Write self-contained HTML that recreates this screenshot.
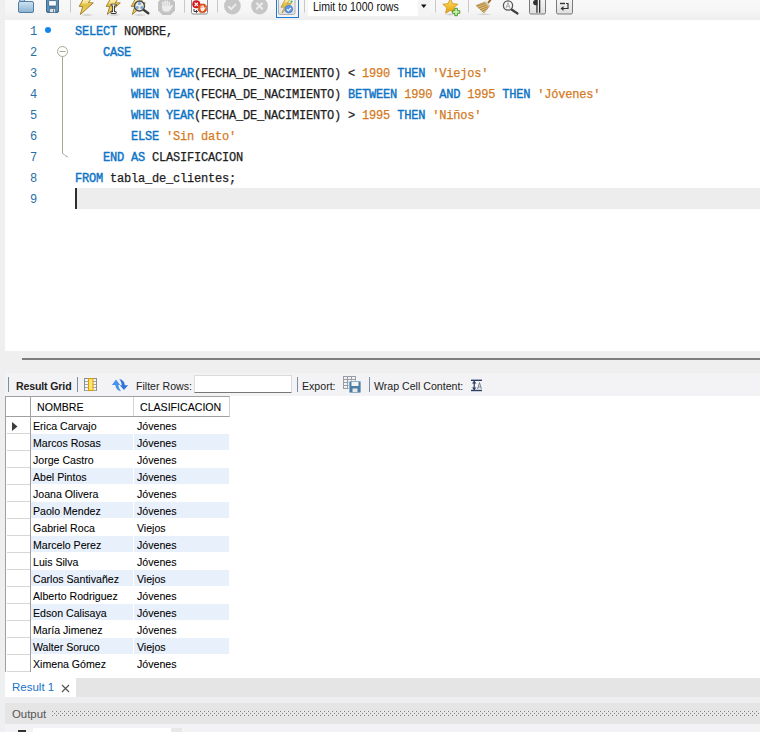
<!DOCTYPE html>
<html><head><meta charset="utf-8">
<style>
*{margin:0;padding:0;box-sizing:border-box}
html,body{width:760px;height:732px;overflow:hidden;background:#eeeff1}
body{position:relative;font-family:"Liberation Sans",sans-serif}
.abs{position:absolute}
.ln{position:absolute;left:0;width:37px;text-align:right;font:12px/21px "Liberation Mono",monospace;letter-spacing:-0.2px;color:#2a6ea8}
.code{position:absolute;left:75px;font:12px/21px "Liberation Mono",monospace;letter-spacing:-0.2px;color:#1e1e1e;white-space:pre;-webkit-text-stroke:0.25px}
.k{color:#0d74c6;-webkit-text-stroke:0.4px}
.n{color:#d47a1e}
.cell,.hdr{position:absolute;font:10.6px/17px "Liberation Sans",sans-serif;color:#000;white-space:pre;-webkit-text-stroke:0.08px}
.hdr{line-height:19px}
.tab{position:absolute;font:11.5px/17px "Liberation Sans",sans-serif;color:#1a73c8;white-space:pre}
.outp{position:absolute;font:11.4px/17px "Liberation Sans",sans-serif;color:#555;white-space:pre}
.tbt{position:absolute;font:10.6px/17px "Liberation Sans",sans-serif;color:#222;white-space:pre}
.dots{background-image:radial-gradient(circle,#8a8a8a 0.6px,transparent 0.9px);background-size:4px 2px}

</style></head><body>
<div class="abs" style="left:5px;top:20px;width:755px;height:331px;background:#fff"></div>
<div class="abs" style="left:77px;top:188px;width:683px;height:21px;background:#ededed"></div>
<div class="abs" style="left:75px;top:188px;width:2px;height:21px;background:#2e2e2e"></div>
<div class="ln" style="top:22px">1</div>
<div class="code" style="top:22px"><span class="k">SELECT</span> NOMBRE,</div>
<div class="ln" style="top:43px">2</div>
<div class="code" style="top:43px">    <span class="k">CASE</span></div>
<div class="ln" style="top:64px">3</div>
<div class="code" style="top:64px">        <span class="k">WHEN</span> <span class="k">YEAR</span>(FECHA_DE_NACIMIENTO) &lt; <span class="n">1990</span> <span class="k">THEN</span> <span class="n">'Viejos'</span></div>
<div class="ln" style="top:85px">4</div>
<div class="code" style="top:85px">        <span class="k">WHEN</span> <span class="k">YEAR</span>(FECHA_DE_NACIMIENTO) <span class="k">BETWEEN</span> <span class="n">1990</span> <span class="k">AND</span> <span class="n">1995</span> <span class="k">THEN</span> <span class="n">'Jóvenes'</span></div>
<div class="ln" style="top:106px">5</div>
<div class="code" style="top:106px">        <span class="k">WHEN</span> <span class="k">YEAR</span>(FECHA_DE_NACIMIENTO) &gt; <span class="n">1995</span> <span class="k">THEN</span> <span class="n">'Niños'</span></div>
<div class="ln" style="top:127px">6</div>
<div class="code" style="top:127px">        <span class="k">ELSE</span> <span class="n">'Sin dato'</span></div>
<div class="ln" style="top:148px">7</div>
<div class="code" style="top:148px">    <span class="k">END</span> <span class="k">AS</span> CLASIFICACION</div>
<div class="ln" style="top:169px">8</div>
<div class="code" style="top:169px"><span class="k">FROM</span> tabla_de_clientes;</div>
<div class="ln" style="top:190px">9</div>
<div class="code" style="top:190px"></div>
<div class="abs" style="left:45px;top:27px;width:6px;height:6px;border-radius:50%;background:#1383f0"></div>
<svg class="abs" style="left:50px;top:40px" width="30" height="125" viewBox="0 0 30 125">
<circle cx="12.5" cy="11.5" r="5" fill="#fff" stroke="#a9a994" stroke-width="1"/>
<line x1="9.5" y1="11.5" x2="15.5" y2="11.5" stroke="#a9a994" stroke-width="1"/>
<line x1="12.5" y1="16.5" x2="12.5" y2="113.5" stroke="#a9a994" stroke-width="1"/>
<polyline points="12.5,113 15,115.5 18,117" fill="none" stroke="#a9a994" stroke-width="1"/>
</svg>
<div class="abs" style="left:5px;top:351px;width:755px;height:22px;background:#efefef"></div>
<div class="abs" style="left:22px;top:358px;width:738px;height:2px;background:#7d7d7d"></div>
<div class="abs" style="left:5px;top:373px;width:755px;height:23px;background:#f3f3f5"></div>
<div class="abs" style="left:5px;top:0;width:755px;height:20px;background:linear-gradient(#f8f8f8 0%,#f6f6f6 50%,#eeeeee 100%)"></div>
<svg class="abs" style="left:0;top:0" width="760" height="20" viewBox="0 0 760 20">
<defs>
<linearGradient id="fold" x1="0" y1="0" x2="0" y2="1"><stop offset="0" stop-color="#cfe3f1"/><stop offset="1" stop-color="#8cb2d0"/></linearGradient>
<linearGradient id="bolt" x1="0" y1="0" x2="0" y2="1"><stop offset="0" stop-color="#fcf3c4"/><stop offset="0.25" stop-color="#f6e28a"/><stop offset="0.4" stop-color="#e2bf45"/><stop offset="1" stop-color="#f0d370"/></linearGradient>
<linearGradient id="btn" x1="0" y1="0" x2="0" y2="1"><stop offset="0" stop-color="#f8f8f8"/><stop offset="1" stop-color="#dedede"/></linearGradient>
<radialGradient id="shadow" cx="0.5" cy="0.5" r="0.5"><stop offset="0" stop-color="#000" stop-opacity="0.18"/><stop offset="1" stop-color="#000" stop-opacity="0"/></radialGradient>
</defs>
<!-- folder -->
<path d="M19.5,-2 h5 v3.5 h-5z" fill="#a9c7de" stroke="#5a86ab" stroke-width="1"/>
<rect x="18.5" y="1.5" width="15" height="11" rx="1.5" fill="url(#fold)" stroke="#4f7fa6" stroke-width="1"/>
<!-- save -->
<rect x="46.5" y="-1.5" width="12" height="14" rx="1.5" fill="#4b7ea7" stroke="#3d6c93" stroke-width="1"/>
<rect x="47.5" y="-1" width="1" height="12" fill="#7aa3c4"/>
<rect x="56.5" y="-1" width="1" height="12" fill="#7aa3c4"/>
<rect x="48.6" y="0.6" width="7.8" height="5.4" rx="0.8" fill="#fdfdfd" stroke="#3d6c93" stroke-width="0.9"/>
<rect x="49.8" y="8.8" width="5.6" height="3.6" fill="#e4e4e4" stroke="#3d6c93" stroke-width="0.5"/>
<rect x="53" y="9.6" width="1" height="2.2" fill="#666"/>
<!-- sep -->
<rect x="70" y="0" width="1" height="12.5" fill="#c8c8c8"/>
<!-- bolt 1 -->
<ellipse cx="87" cy="15" rx="7" ry="1.6" fill="url(#shadow)"/>
<path d="M83.6,-1.5 L91.3,-1.5 L88.3,2.7 L93.3,2.9 L80.3,14.5 L82.7,6.6 L79.2,6.4 Z" fill="url(#bolt)" stroke="#9c7a22" stroke-width="0.9" stroke-linejoin="round"/>
<!-- bolt 2 with I-beam -->
<ellipse cx="114" cy="15" rx="7" ry="1.6" fill="url(#shadow)"/>
<path d="M110.6,-1.5 L118.3,-1.5 L115.3,2.7 L120.3,2.9 L107.3,14.5 L109.7,6.6 L106.2,6.4 Z" fill="url(#bolt)" stroke="#9c7a22" stroke-width="0.9" stroke-linejoin="round"/>
<path d="M111.8,5 h3.6 M113.6,5 v7.6 M111.8,12.6 h3.6" stroke="#222" stroke-width="2.6" stroke-linecap="round"/>
<path d="M111.8,5 h3.6 M113.6,5 v7.6 M111.8,12.6 h3.6" stroke="#fff" stroke-width="1" stroke-linecap="round"/>
<!-- bolt 3 with magnifier -->
<ellipse cx="140" cy="15" rx="7" ry="1.6" fill="url(#shadow)"/>
<path d="M135.6,-1.5 L143.3,-1.5 L140.3,2.7 L145.3,2.9 L132.3,14.5 L134.7,6.6 L131.2,6.4 Z" fill="url(#bolt)" stroke="#9c7a22" stroke-width="0.9" stroke-linejoin="round"/>
<line x1="143.8" y1="10" x2="148.3" y2="13.2" stroke="#3a3a3a" stroke-width="2.4" stroke-linecap="round"/>
<circle cx="139.5" cy="6" r="5" fill="#eceade" stroke="#4a4a4a" stroke-width="1.4"/>
<circle cx="139.5" cy="3.6" r="1.5" fill="#79a7dc"/>
<circle cx="137.2" cy="7.4" r="1.5" fill="#79a7dc"/>
<circle cx="141.8" cy="7.4" r="1.5" fill="#79a7dc"/>
<!-- stop hand gray octagon -->
<path d="M162.5,-2.5 L170.5,-2.5 L175,2 L175,10.5 L170.5,15 L162.5,15 L158,10.5 L158,2 Z" fill="#c3c3c3"/>
<g fill="#ececec">
<rect x="162.2" y="1.5" width="1.5" height="7" rx="0.75"/>
<rect x="164.3" y="0.6" width="1.5" height="7" rx="0.75"/>
<rect x="166.4" y="0.6" width="1.5" height="7" rx="0.75"/>
<rect x="168.5" y="1.5" width="1.5" height="7" rx="0.75"/>
<path d="M162.2,6 h7.8 l1.6,-1 a0.9,0.9 0 0,1 1.2,1.2 l-2.6,4 q-1.2,1.6 -3.2,1.6 h-1 q-3.8,0 -3.8,-3.6z"/>
</g>
<!-- sep -->
<rect x="184" y="0" width="1" height="12.5" fill="#c8c8c8"/>
<!-- stop on error icon -->
<rect x="191.5" y="-2" width="16" height="16" rx="1.5" fill="#fafafa" stroke="#8c8c8c" stroke-width="1"/>
<circle cx="196.3" cy="4.3" r="4" fill="#d4141c"/>
<path d="M194.6,2.6 l3.4,3.4 M198,2.6 l-3.4,3.4" stroke="#fff" stroke-width="1.3"/>
<path d="M200.3,4 L204.5,4 L206.6,6.2 L206.6,10.5 L204.5,12.6 L200.3,12.6 L198.2,10.5 L198.2,6.2 Z" fill="#e4501c" stroke="#c23a10" stroke-width="0.5"/>
<g fill="#fff3ec"><rect x="200.6" y="5.6" width="0.9" height="3.5" rx="0.45"/><rect x="201.8" y="5.1" width="0.9" height="3.8" rx="0.45"/><rect x="203" y="5.3" width="0.9" height="3.6" rx="0.45"/><path d="M200.6,8 h3.3 l0.9,-0.8 a0.5,0.5 0 0,1 0.7,0.7 l-1.4,2.4 q-0.7,1 -1.9,1 q-1.6,0 -1.6,-1.8z"/></g>
<path d="M194,9 v2.5 h3 M196,10.2 l1.5,1.3 l-1.5,1.3" stroke="#333" stroke-width="1" fill="none"/>
<!-- sep -->
<rect x="217" y="0" width="1" height="12.5" fill="#c8c8c8"/>
<!-- gray check circle -->
<circle cx="232.4" cy="6" r="8.4" fill="#c6c6c6"/>
<path d="M228.3,6.3 l2.8,2.8 l5,-5" stroke="#ececec" stroke-width="2" fill="none"/>
<!-- gray x circle -->
<circle cx="259.5" cy="6" r="8.4" fill="#c6c6c6"/>
<path d="M256.3,2.8 l6.4,6.4 M262.7,2.8 l-6.4,6.4" stroke="#ececec" stroke-width="2"/>
<!-- toggle -->
<rect x="276.5" y="-2.5" width="22" height="20" fill="#f4f4f4" stroke="#1a78d6" stroke-width="1"/>
<rect x="278.5" y="-2" width="16.5" height="16.5" rx="1.5" fill="url(#btn)" stroke="#b0b0b0" stroke-width="1"/>
<path d="M286,-2 L291,-2 L287,3.5 L291.5,3 L282,13 L284.5,7 L281,7.3 Z" fill="url(#bolt)" stroke="#b08a24" stroke-width="0.7"/>
<circle cx="288.8" cy="9.1" r="3.9" fill="#5b95e2" stroke="#3a78c8" stroke-width="0.6"/>
<path d="M286.9,9.2 l1.4,1.4 l2.6,-2.6" stroke="#fff" stroke-width="1.1" fill="none"/>
<circle cx="291.5" cy="1.6" r="1.1" fill="#2fc02f"/>
<!-- sep -->
<rect x="304" y="0" width="1" height="12.5" fill="#c8c8c8"/>
<!-- dropdown -->
<rect x="308" y="0" width="122" height="16" fill="#fff"/>
<rect x="418" y="0" width="12" height="16" fill="#f4f4f4"/>
<path d="M421,4.5 h5.5 l-2.75,3.5z" fill="#111"/>
<!-- sep -->
<rect x="435" y="0" width="1" height="12.5" fill="#c8c8c8"/>
<!-- star -->
<ellipse cx="450" cy="14.5" rx="6" ry="1.4" fill="url(#shadow)"/>
<linearGradient id="starg" x1="0" y1="0" x2="0" y2="1"><stop offset="0" stop-color="#fde27a"/><stop offset="0.6" stop-color="#f2bb2c"/><stop offset="1" stop-color="#e59a18"/></linearGradient>
<path d="M450.3,-1.5 L452.5,3.6 L457.8,4.2 L453.8,7.8 L455,13.2 L450.3,10.4 L445.6,13.2 L446.8,7.8 L442.8,4.2 L448.1,3.6 Z" fill="url(#starg)" stroke="#cf901a" stroke-width="0.8" stroke-linejoin="round"/>
<path d="M454.8,8.3 h2.6 v2.4 h2.4 v2.6 h-2.4 v2.4 h-2.6 v-2.4 h-2.4 v-2.6 h2.4z" fill="#c9f0b0" stroke="#4f9a2e" stroke-width="1"/>
<!-- sep -->
<rect x="468" y="0" width="1" height="12.5" fill="#c8c8c8"/>
<!-- broom -->
<ellipse cx="484" cy="14.3" rx="8.5" ry="1.3" fill="url(#shadow)"/>
<path d="M488.5,2.5 L491.5,-1.5" stroke="#9a6a24" stroke-width="2" stroke-linecap="round"/>
<path d="M476,5.5 L485.5,1.8 L489.5,6 L484,12.8 Z" fill="#ddbb78" stroke="#a98140" stroke-width="0.6"/>
<path d="M477.2,6.2 L486.5,3 M478.5,8 L487.6,4.6 M480,9.8 L488,6.6 M481.8,11.6 L487.5,8.6" stroke="#a57a38" stroke-width="0.8"/>
<path d="M485.2,1.6 L489.8,6.2" stroke="#d9d6c8" stroke-width="1.6"/>
<!-- magnifier A -->
<line x1="511.5" y1="9.5" x2="517.5" y2="13.5" stroke="#404040" stroke-width="2.2" stroke-linecap="round"/>
<circle cx="508" cy="5.5" r="4.6" fill="#f7f7f7" stroke="#555" stroke-width="1.3"/>
<path d="M506,8.3 L508,2.6 L510,8.3 M506.7,6.4 h2.6" stroke="#999" stroke-width="0.8" fill="none"/>
<!-- pilcrow button -->
<rect x="529.5" y="-2" width="16" height="16" rx="1.5" fill="url(#btn)" stroke="#7a7a7a" stroke-width="1"/>
<path d="M537.5,0 h-2 a2.3,2.5 0 0,0 0,5.2 h2z" fill="#333"/>
<rect x="536.3" y="0" width="1.3" height="12.8" fill="#333"/>
<rect x="539" y="0" width="1.3" height="12.8" fill="#333"/>
<!-- wrap button -->
<rect x="556.5" y="-2" width="16" height="16" rx="1.5" fill="url(#btn)" stroke="#7a7a7a" stroke-width="1"/>
<path d="M560,3.5 h5" stroke="#333" stroke-width="1.4"/>
<path d="M566,3.5 h2 v5 h-5.5" stroke="#333" stroke-width="1.2" fill="none"/>
<path d="M560.5,8.5 l3,-2.5 v5z" fill="#333"/>
</svg>

<div class="abs" style="left:8px;top:377px;width:1px;height:15px;background:#7a8ea8"></div>
<div class="tbt" style="left:16px;top:378px;font-weight:bold;letter-spacing:-0.15px">Result Grid</div>
<div class="abs" style="left:77px;top:377px;width:1px;height:15px;background:#7a8ea8"></div>
<div class="tbt" style="left:136px;top:378px">Filter Rows:</div>
<div class="abs" style="left:194px;top:375px;width:98px;height:18px;background:#fff;border:1px solid #dcdcdc;border-bottom:1px solid #777"></div>
<div class="abs" style="left:297px;top:377px;width:1px;height:15px;background:#7a8ea8"></div>
<div class="tbt" style="left:302px;top:378px">Export:</div>
<div class="abs" style="left:369px;top:377px;width:1px;height:15px;background:#7a8ea8"></div>
<div class="tbt" style="left:374px;top:378px">Wrap Cell Content:</div>
<div class="tbt" style="left:313px;top:0px;font-size:12.5px;line-height:15px;color:#111;transform:scaleX(0.845);transform-origin:0 0">Limit to 1000 rows</div>

<svg class="abs" style="left:0;top:370px" width="760" height="30" viewBox="0 370 760 30">
<!-- columns icon -->
<rect x="84" y="378" width="13" height="13" fill="#8b9098"/>
<g fill="#f4f6f8">
<rect x="85" y="379" width="3" height="2.2"/><rect x="85" y="382" width="3" height="2.2"/><rect x="85" y="385" width="3" height="2.2"/><rect x="85" y="388" width="3" height="2.2"/>
<rect x="93" y="379" width="3" height="2.2"/><rect x="93" y="382" width="3" height="2.2"/><rect x="93" y="385" width="3" height="2.2"/><rect x="93" y="388" width="3" height="2.2"/>
</g>
<rect x="88.5" y="378.5" width="4.5" height="12" fill="#fde56a" stroke="#e09a00" stroke-width="1"/>
<!-- refresh icon -->
<path d="M116,379.6 L120.2,384.9 L118.3,384.9 Q118.6,388.2 121,391.2 Q115.8,390.4 115.3,384.9 L111.9,384.9 Z" fill="#4893ec"/>
<path d="M124,390 L119.8,385.2 L121.8,385.2 Q121.5,381.6 119.3,379 Q124.3,379.8 124.8,385.2 L128.1,385.2 Z" fill="#2f74dc"/>
<!-- export icon -->
<rect x="343" y="376" width="13" height="13" fill="#9a9ea4"/>
<g fill="#f0f2f4">
<rect x="344" y="377" width="3" height="2"/><rect x="348" y="377" width="3" height="2"/><rect x="352" y="377" width="3" height="2"/>
<rect x="344" y="380" width="3" height="2"/><rect x="348" y="380" width="3" height="2"/><rect x="352" y="380" width="3" height="2"/>
<rect x="344" y="383" width="3" height="2"/><rect x="348" y="383" width="3" height="2"/><rect x="352" y="383" width="3" height="2"/>
<rect x="344" y="386" width="3" height="2"/><rect x="348" y="386" width="3" height="2"/><rect x="352" y="386" width="3" height="2"/>
</g>
<rect x="349" y="381" width="12" height="12" rx="1" fill="#4a7ea6" stroke="#f3f3f5" stroke-width="0.8"/>
<rect x="351.5" y="382" width="7" height="4" fill="#f4f4f4"/>
<rect x="352.5" y="388.5" width="5" height="3.5" fill="#e8e8e8"/>
<!-- wrap cell icon -->
<rect x="471" y="379.6" width="11" height="1.4" fill="#2c3e66"/>
<rect x="471" y="389.8" width="11" height="1.4" fill="#2c3e66"/>
<rect x="473.6" y="381" width="1.2" height="9" fill="#2c3e66"/>
<path d="M471.9,383.6 L474.2,381 L476.5,383.6 Z M471.9,387.4 L474.2,390 L476.5,387.4 Z" fill="#2c3e66"/>
<path d="M477.6,389 L479.5,382.5 L481.4,389 M478.3,387 h2.4" stroke="#6e7891" stroke-width="0.9" fill="none"/>
</svg>

<div class="abs" style="left:5px;top:396px;width:755px;height:282px;background:#fff"></div>
<div class="abs" style="left:5px;top:678px;width:71px;height:19px;background:#fff"></div>
<div class="abs" style="left:5px;top:396px;width:225px;height:21px;border:1px solid #a0a0a0;border-right-color:#d0d0d0"></div>
<div class="abs" style="left:5px;top:396px;width:1px;height:276px;background:#a0a0a0"></div>
<div class="abs" style="left:30px;top:396px;width:1px;height:276px;background:#a0a0a0"></div>
<div class="abs" style="left:133px;top:397px;width:1px;height:19px;background:#d4d4d4"></div>
<div class="hdr" style="left:37px;top:398px">NOMBRE</div>
<div class="hdr" style="left:140px;top:398px">CLASIFICACION</div>
<div class="abs" style="left:7px;top:433px;width:23px;height:1px;background:#d6d6d6"></div>
<div class="cell" style="left:33px;top:418px">Erica Carvajo</div>
<div class="cell" style="left:137px;top:418px">Jóvenes</div>
<div class="abs" style="left:31px;top:434px;width:102px;height:16px;background:#e8f0fc"></div>
<div class="abs" style="left:134px;top:434px;width:95px;height:16px;background:#e8f0fc"></div>
<div class="abs" style="left:7px;top:450px;width:23px;height:1px;background:#d6d6d6"></div>
<div class="cell" style="left:33px;top:435px">Marcos Rosas</div>
<div class="cell" style="left:137px;top:435px">Jóvenes</div>
<div class="abs" style="left:7px;top:467px;width:23px;height:1px;background:#d6d6d6"></div>
<div class="cell" style="left:33px;top:452px">Jorge Castro</div>
<div class="cell" style="left:137px;top:452px">Jóvenes</div>
<div class="abs" style="left:31px;top:468px;width:102px;height:16px;background:#e8f0fc"></div>
<div class="abs" style="left:134px;top:468px;width:95px;height:16px;background:#e8f0fc"></div>
<div class="abs" style="left:7px;top:484px;width:23px;height:1px;background:#d6d6d6"></div>
<div class="cell" style="left:33px;top:469px">Abel Pintos</div>
<div class="cell" style="left:137px;top:469px">Jóvenes</div>
<div class="abs" style="left:7px;top:501px;width:23px;height:1px;background:#d6d6d6"></div>
<div class="cell" style="left:33px;top:486px">Joana Olivera</div>
<div class="cell" style="left:137px;top:486px">Jóvenes</div>
<div class="abs" style="left:31px;top:502px;width:102px;height:16px;background:#e8f0fc"></div>
<div class="abs" style="left:134px;top:502px;width:95px;height:16px;background:#e8f0fc"></div>
<div class="abs" style="left:7px;top:518px;width:23px;height:1px;background:#d6d6d6"></div>
<div class="cell" style="left:33px;top:503px">Paolo Mendez</div>
<div class="cell" style="left:137px;top:503px">Jóvenes</div>
<div class="abs" style="left:7px;top:535px;width:23px;height:1px;background:#d6d6d6"></div>
<div class="cell" style="left:33px;top:520px">Gabriel Roca</div>
<div class="cell" style="left:137px;top:520px">Viejos</div>
<div class="abs" style="left:31px;top:536px;width:102px;height:16px;background:#e8f0fc"></div>
<div class="abs" style="left:134px;top:536px;width:95px;height:16px;background:#e8f0fc"></div>
<div class="abs" style="left:7px;top:552px;width:23px;height:1px;background:#d6d6d6"></div>
<div class="cell" style="left:33px;top:537px">Marcelo Perez</div>
<div class="cell" style="left:137px;top:537px">Jóvenes</div>
<div class="abs" style="left:7px;top:569px;width:23px;height:1px;background:#d6d6d6"></div>
<div class="cell" style="left:33px;top:554px">Luis Silva</div>
<div class="cell" style="left:137px;top:554px">Jóvenes</div>
<div class="abs" style="left:31px;top:570px;width:102px;height:16px;background:#e8f0fc"></div>
<div class="abs" style="left:134px;top:570px;width:95px;height:16px;background:#e8f0fc"></div>
<div class="abs" style="left:7px;top:586px;width:23px;height:1px;background:#d6d6d6"></div>
<div class="cell" style="left:33px;top:571px">Carlos Santivañez</div>
<div class="cell" style="left:137px;top:571px">Viejos</div>
<div class="abs" style="left:7px;top:603px;width:23px;height:1px;background:#d6d6d6"></div>
<div class="cell" style="left:33px;top:588px">Alberto Rodriguez</div>
<div class="cell" style="left:137px;top:588px">Jóvenes</div>
<div class="abs" style="left:31px;top:604px;width:102px;height:16px;background:#e8f0fc"></div>
<div class="abs" style="left:134px;top:604px;width:95px;height:16px;background:#e8f0fc"></div>
<div class="abs" style="left:7px;top:620px;width:23px;height:1px;background:#d6d6d6"></div>
<div class="cell" style="left:33px;top:605px">Edson Calisaya</div>
<div class="cell" style="left:137px;top:605px">Jóvenes</div>
<div class="abs" style="left:7px;top:637px;width:23px;height:1px;background:#d6d6d6"></div>
<div class="cell" style="left:33px;top:622px">María Jimenez</div>
<div class="cell" style="left:137px;top:622px">Jóvenes</div>
<div class="abs" style="left:31px;top:638px;width:102px;height:16px;background:#e8f0fc"></div>
<div class="abs" style="left:134px;top:638px;width:95px;height:16px;background:#e8f0fc"></div>
<div class="abs" style="left:7px;top:654px;width:23px;height:1px;background:#d6d6d6"></div>
<div class="cell" style="left:33px;top:639px">Walter Soruco</div>
<div class="cell" style="left:137px;top:639px">Viejos</div>
<div class="abs" style="left:7px;top:671px;width:23px;height:1px;background:#d6d6d6"></div>
<div class="cell" style="left:33px;top:656px">Ximena Gómez</div>
<div class="cell" style="left:137px;top:656px">Jóvenes</div>
<svg class="abs" style="left:11px;top:421px" width="8" height="11"><polygon points="1,1 6.5,5.5 1,10" fill="#3c3c3c"/></svg>
<div class="abs" style="left:76px;top:678px;width:684px;height:19px;background:#e5e5e5"></div>
<div class="abs" style="left:5px;top:697px;width:755px;height:6px;background:#eeeef0"></div>
<div class="tab" style="left:12px;top:679px">Result 1</div>
<svg class="abs" style="left:61px;top:684px" width="10" height="9"><path d="M1,1 L8,8 M8,1 L1,8" stroke="#555" stroke-width="1.2"/></svg>
<div class="abs" style="left:5px;top:703px;width:755px;height:21px;background:#e5e5e5"></div>
<div class="outp" style="left:12px;top:706px">Output</div>
<svg class="abs" style="left:51px;top:710px" width="709" height="7"><defs><pattern id="dp" x="0" y="0" width="4" height="4" patternUnits="userSpaceOnUse"><rect x="1" y="1" width="1" height="1" fill="#7f7f7f"/><rect x="3" y="3" width="1" height="1" fill="#7f7f7f"/><rect x="0" y="1" width="1" height="1" fill="#f4f4f4"/><rect x="2" y="3" width="1" height="1" fill="#f4f4f4"/></pattern></defs><rect x="0" y="0" width="709" height="6" fill="url(#dp)"/></svg>
<div class="abs" style="left:5px;top:724px;width:755px;height:8px;background:#f3f3f5"></div>
<div class="abs" style="left:33px;top:728px;width:149px;height:4px;background:#fff"></div>
<div class="abs" style="left:171px;top:728px;width:11px;height:4px;background:#e8e8e8"></div>
<div class="abs" style="left:18px;top:730px;width:8px;height:2px;background:#333"></div>
</body></html>
